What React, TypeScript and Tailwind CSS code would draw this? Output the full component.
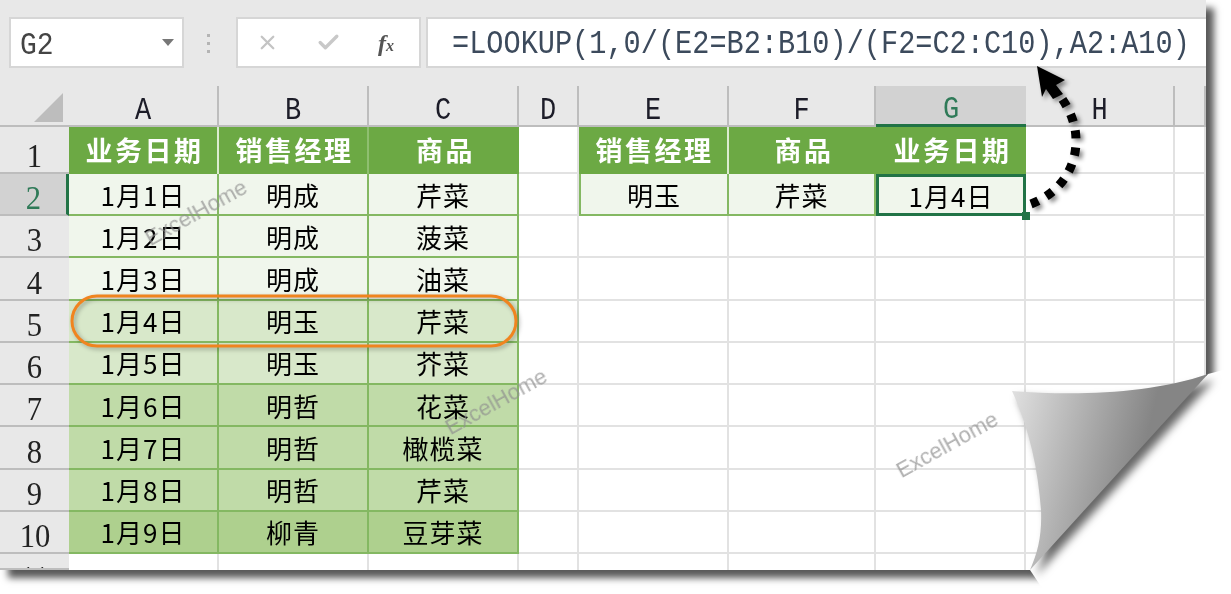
import React from 'react';
import { X, Check } from 'lucide-react';

const columns = ['A', 'B', 'C', 'D', 'E', 'F', 'G', 'H', ''];

const rows = [
  { date: '1月1日', name: '明成', item: '芹菜', fill: 'bg-[#f0f6ec]' },
  { date: '1月2日', name: '明成', item: '菠菜', fill: 'bg-[#f0f6ec]' },
  { date: '1月3日', name: '明成', item: '油菜', fill: 'bg-[#f0f6ec]' },
  { date: '1月4日', name: '明玉', item: '芹菜', fill: 'bg-[#d8e8ca]' },
  { date: '1月5日', name: '明玉', item: '芥菜', fill: 'bg-[#d8e8ca]' },
  { date: '1月6日', name: '明哲', item: '花菜', fill: 'bg-[#c0dba8]' },
  { date: '1月7日', name: '明哲', item: '橄榄菜', fill: 'bg-[#c0dba8]' },
  { date: '1月8日', name: '明哲', item: '芹菜', fill: 'bg-[#c0dba8]' },
  { date: '1月9日', name: '柳青', item: '豆芽菜', fill: 'bg-[#aed08e]' },
];

const cjk = "font-['Noto_Sans_CJK_SC',sans-serif]";
const plain = 'border-r-2 border-b-2 border-[#e2e2e2]';
const green = 'border-r-2 border-b-2 border-[#84b862]';
const bodyText = `${cjk} flex items-center justify-center text-[26px] tracking-[1px] text-black`;
const headText = `${cjk} flex items-center justify-center bg-[#6ca944] pl-[3px] text-[27px] font-bold tracking-[2.5px] text-white`;

const RowHead: React.FC<{ label: string; active?: boolean; cut?: boolean }> = ({ label, active, cut }) => (
  <div
    className={`flex justify-center overflow-hidden border-b-2 border-[#bdbdbd] font-['Liberation_Serif',serif] text-[34px] leading-[34px] ${
      cut ? 'items-start pt-[7px]' : 'items-end'
    } ${active ? 'border-r-[3px] border-r-[#217346] bg-[#d2d2d2] text-[#2f7a58]' : 'bg-[#e8e8e8] text-[#222]'}`}
  >
    <span className={cut ? 'scale-x-90' : 'translate-y-[1px] scale-x-90'}>{label}</span>
  </div>
);

const Watermark: React.FC<{ className: string }> = ({ className }) => (
  <span
    className={`absolute -rotate-[29deg] font-['Liberation_Sans',sans-serif] text-[22px] leading-none text-[#8f8f8f]/70 blur-[0.3px] ${className}`}
  >
    ExcelHome
  </span>
);

function App() {
  return (
    <div className="relative h-[594px] w-[1231px] overflow-hidden bg-white">
      <div className="h-[570px] w-[1206px] shadow-[8px_8px_7px_rgba(0,0,0,0.65)]">
        <div className="h-full w-full overflow-hidden bg-white blur-[0.5px]">
          {/* formula bar */}
          <div className="flex h-[86px] items-start gap-[5px] bg-[#e8e8e8] pl-[9px] pt-[17px]">
            <div className="flex h-[51px] w-[175px] items-center justify-between border-2 border-[#d6d6d6] bg-white pl-[9px] pr-[8px] font-['Liberation_Mono',monospace] text-[28px] text-[#444]">
              <span className="translate-y-[3px] scale-y-115">G2</span>
              <span className="h-0 w-0 border-x-[6px] border-t-[7px] border-x-transparent border-t-[#777]" />
            </div>
            <div className="flex w-[42px] flex-col items-center gap-[5px] pr-[3px] pt-[17px]">
              <span className="h-[3px] w-[3px] bg-[#b4b4b4]" />
              <span className="h-[3px] w-[3px] bg-[#b4b4b4]" />
              <span className="h-[3px] w-[3px] bg-[#b4b4b4]" />
            </div>
            <div className="flex h-[51px] w-[185px] items-center border-2 border-[#d6d6d6] bg-white pl-[18px]">
              <X size={23} strokeWidth={2.4} className="text-[#c4c4c4]" />
              <Check size={25} strokeWidth={3.2} className="ml-[37px] text-[#c8c8c8]" />
              <span className="ml-[37px] font-['Liberation_Serif',serif] text-[24px] font-bold italic text-[#555]">
                f<span className="text-[16px]">x</span>
              </span>
            </div>
            <div className="flex h-[51px] flex-1 items-center border-y-2 border-l-2 border-[#d6d6d6] bg-white pl-[24px] font-['Liberation_Mono',monospace] text-[28.6px] text-[#3c4a5c]">
              <span className="translate-y-[3px] scale-y-115">=LOOKUP(1,0/(E2=B2:B10)/(F2=C2:C10),A2:A10)</span>
            </div>
          </div>

          {/* sheet */}
          <div className="grid grid-cols-[69px_150px_150px_150px_60px_150px_147px_150px_149px_31px] grid-rows-[41px_47px_repeat(9,42.22px)_16px]">
            <div className="flex items-end justify-end border-b-2 border-[#bdbdbd] bg-[#e8e8e8] pb-[3px] pr-[6px]">
              <span className="h-[29px] w-[29px] bg-[#bdbdbd] [clip-path:polygon(100%_0,100%_100%,0_100%)]" />
            </div>
            {columns.map((col) => (
              <div
                key={col || 'blank'}
                className={`flex items-center justify-center pt-[10px] font-['Liberation_Mono',monospace] text-[27px] leading-[30px] ${
                  col === 'G'
                    ? 'border-b-[3px] border-[#217346] bg-[#d2d2d2] text-[#2f7a58]'
                    : 'border-r-2 border-b-2 border-[#bdbdbd] bg-[#e8e8e8] text-[#1c1c28]'
                }`}
              >
                <span className="scale-y-115">{col}</span>
              </div>
            ))}

            <RowHead label="1" />
            <div className={`${headText} border-r-2 border-[#dcebd0]`}>业务日期</div>
            <div className={`${headText} border-r-2 border-[#8fbf70]`}>销售经理</div>
            <div className={headText}>商品</div>
            <div className={plain} />
            <div className={`${headText} border-r-2 border-[#dcebd0]`}>销售经理</div>
            <div className={headText}>商品</div>
            <div className={headText}>业务日期</div>
            <div className={plain} />
            <div className={plain} />

            {rows.map((row, i) => (
              <React.Fragment key={row.date}>
                <RowHead label={String(i + 2)} active={i === 0} />
                <div className={`${bodyText} ${green} ${row.fill}`}>{row.date}</div>
                <div className={`${bodyText} ${green} ${row.fill}`}>{row.name}</div>
                <div className={`${bodyText} ${green} ${row.fill}`}>{row.item}</div>
                <div className={plain} />
                {i === 0 ? (
                  <>
                    <div className={`${bodyText} ${green} border-l-2 ${row.fill}`}>明玉</div>
                    <div className={`${bodyText} ${green} ${row.fill}`}>芹菜</div>
                    <div className={`${bodyText} border-[3px] border-[#217346] ${row.fill}`}>1月4日</div>
                  </>
                ) : (
                  <>
                    <div className={plain} />
                    <div className={plain} />
                    <div className={plain} />
                  </>
                )}
                <div className={plain} />
                <div className={plain} />
              </React.Fragment>
            ))}

            <RowHead label="11" cut />
            {columns.map((col) => (
              <div key={`last-${col || 'blank'}`} className="border-r-2 border-[#e2e2e2]" />
            ))}
          </div>
        </div>
      </div>

      {/* fill handle on G2 */}
      <span className="absolute left-[1022px] top-[212px] h-[8px] w-[8px] bg-[#217346]" />

      <Watermark className="left-[140px] top-[202px]" />
      <Watermark className="left-[440px] top-[391px]" />
      <Watermark className="left-[891px] top-[434px]" />

      {/* annotations and the page curl */}
      <svg className="absolute left-0 top-0" width="1231" height="594" viewBox="0 0 1231 594" fill="none">
        <defs>
          <linearGradient id="curl" gradientUnits="userSpaceOnUse" x1="1012" y1="391" x2="1150" y2="425">
            <stop offset="0" stopColor="#e0e0e0" />
            <stop offset="1" stopColor="#858585" />
          </linearGradient>
        </defs>

        <rect
          x="72"
          y="296"
          width="444"
          height="50"
          rx="25"
          stroke="#f0841f"
          strokeWidth="3"
          className="drop-shadow-[2px_2px_2px_rgba(0,0,0,0.3)]"
        />

        <g className="drop-shadow-[3px_3px_2px_rgba(0,0,0,0.45)]">
          <path
            d="M1031 204 C1058 194 1076 170 1076 141 C1076 122 1069 108 1058 93"
            stroke="#000"
            strokeWidth="9"
            strokeDasharray="8 9"
          />
          <path d="M1037 66 L1065 80 L1056 85 L1063 94 L1053 99 L1046 89 L1042 97 Z" fill="#000" />
        </g>

        <polygon points="1208,374 1231,368 1231,594 1046,594 1030,570" fill="#fff" />
        <path
          d="M1208 374 C1150 394 1075 396 1012 391 C1030 430 1038 470 1041 510 C1042 535 1038 552 1030 570 Z"
          fill="url(#curl)"
          className="drop-shadow-[6px_6px_4px_rgba(0,0,0,0.6)]"
        />
      </svg>
    </div>
  );
}

export default App;
